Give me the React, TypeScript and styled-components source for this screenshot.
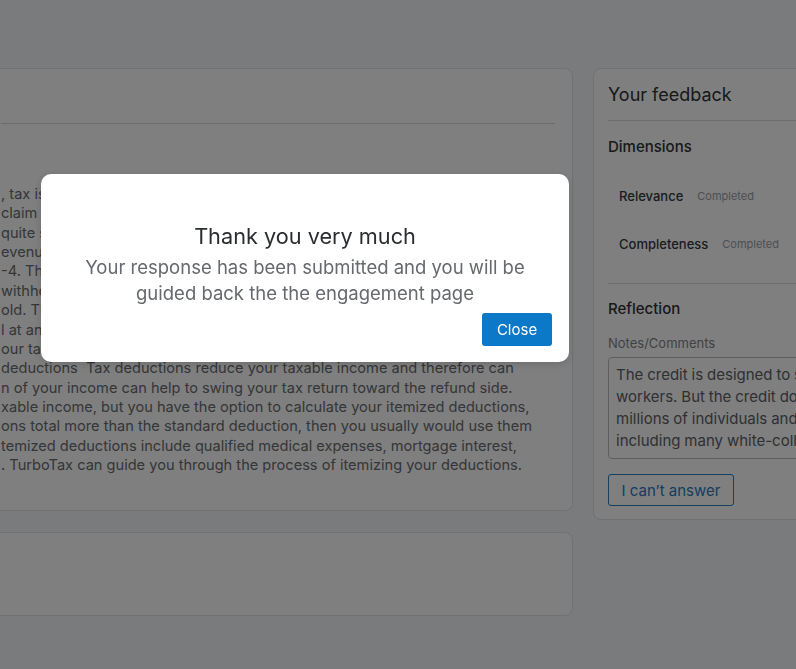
import React from "react";
import styled, { createGlobalStyle } from "styled-components";

const GlobalStyle = createGlobalStyle`
  html, body {
    margin: 0;
    padding: 0;
    background: #f4f6f8;
    font-family: Inter, "Noto Sans", "Liberation Sans", sans-serif;
    overflow: hidden;
  }
  * {
    box-sizing: border-box;
  }
`;

const Page = styled.div`
  display: grid;
  grid-template-columns: 590px 262px;
  column-gap: 20px;
  align-items: start;
  padding-top: 68px;
  margin-left: -17px;
  width: 900px;
`;

const MainColumn = styled.div`
  display: flex;
  flex-direction: column;
  gap: 21px;
`;

const Card = styled.section<{ $height: number }>`
  height: ${({ $height }) => $height}px;
  background: #ffffff;
  border: 1px solid #dfe2e6;
  border-radius: 8px;
  overflow: hidden;
`;

const CardHeader = styled.div`
  height: 55px;
  margin: 0 17px;
  border-bottom: 1px solid #d6d9dd;
`;

const ArticleText = styled.div`
  padding: 61px 17px 0;
  overflow: hidden;
  color: #686c70;
  font-size: 14.6px;
  line-height: 19.36px;
`;

const Line = styled.div`
  white-space: pre;
`;

const Panel = styled.aside`
  background: #ffffff;
  border: 1px solid #dfe2e6;
  border-radius: 8px;
  padding: 0 14px 13px;
  height: 452px;
`;

const PanelTitle = styled.h2`
  margin: 0;
  padding: 14px 0 14px;
  font-size: 18px;
  line-height: 23px;
  font-weight: 400;
  color: #2e3236;
  border-bottom: 1px solid #d6d9dd;
  white-space: nowrap;
`;

const Section = styled.div<{ $divider?: boolean; $top: number }>`
  padding: ${({ $top }) => $top}px 0 15px;
  border-bottom: ${({ $divider }) => ($divider ? "1px solid #d6d9dd" : "none")};
`;

const SectionTitle = styled.h3`
  margin: 0;
  font-size: 15px;
  line-height: 20px;
  font-weight: 500;
  color: #2e3236;
`;

const DimensionList = styled.div`
  display: flex;
  flex-direction: column;
  margin-top: 15px;
`;

const DimensionRow = styled.div`
  display: flex;
  align-items: center;
  gap: 14px;
  height: 48px;
  padding-left: 11px;
`;

const DimensionName = styled.span`
  font-size: 13px;
  font-weight: 500;
  color: #34383c;
`;

const DimensionStatus = styled.span`
  font-size: 11px;
  color: #9a9ea3;
`;

const FieldLabel = styled.div`
  margin-top: 15px;
  font-size: 13px;
  line-height: 18px;
  color: #80858a;
`;

const NoteBox = styled.div`
  margin-top: 5px;
  margin-right: -30px;
  height: 102px;
  padding: 6px 7px;
  border: 1px solid #b9bdc2;
  border-radius: 4px;
  font-size: 15px;
  line-height: 22px;
  word-spacing: -0.3px;
  color: #5c6166;
  white-space: pre;
  overflow: hidden;
`;

const OutlineButton = styled.button`
  margin-top: 15px;
  height: 32px;
  width: 126px;
  padding: 0;
  background: #ffffff;
  border: 1.5px solid #2a80c0;
  border-radius: 3px;
  color: #2a7aba;
  font-family: inherit;
  font-size: 15px;
`;

const Overlay = styled.div`
  position: fixed;
  inset: 0;
  background: rgba(0, 0, 0, 0.5);
  padding: 174px 0 0 41px;
`;

const Modal = styled.div`
  width: 528px;
  height: 188px;
  background: #ffffff;
  border-radius: 10px;
  padding: 48px 17px 16px;
  display: flex;
  flex-direction: column;
  align-items: center;
  box-shadow: 0 2px 8px rgba(0, 0, 0, 0.15);
`;

const ModalTitle = styled.h1`
  margin: 0;
  font-size: 21.7px;
  line-height: 28px;
  font-weight: 400;
  color: #2a2d30;
`;

const ModalText = styled.p`
  margin: 4px 0 0;
  font-size: 18.5px;
  line-height: 26px;
  color: #66696d;
  text-align: center;
`;

const ModalFooter = styled.div`
  align-self: stretch;
  display: flex;
  justify-content: flex-end;
  margin-top: auto;
`;

const PrimaryButton = styled.button`
  width: 70px;
  height: 33px;
  padding: 0;
  border: none;
  border-radius: 3px;
  background: #0b78c8;
  color: #ffffff;
  font-family: inherit;
  font-size: 15px;
`;

const articleLines = [
  ", tax is withheld from every paycheck based on what you",
  "claim on your W-4 form. When too much is withheld, it is",
  "quite simple to get that money back from the Internal",
  "evenue Service when you file your return in April.",
  "-4. This form tells your employer how much to hold back",
  "withheld from your pay depends on your filing status and",
  "old. The more allowances you claim, the less is held back",
  "l at any time during the year if your situation changes.",
  "our tax refund also depends on the credits you can claim.",
  "deductions  Tax deductions reduce your taxable income and therefore can",
  "n of your income can help to swing your tax return toward the refund side.",
  "xable income, but you have the option to calculate your itemized deductions,",
  "ons total more than the standard deduction, then you usually would use them",
  "temized deductions include qualified medical expenses, mortgage interest,",
  ". TurboTax can guide you through the process of itemizing your deductions.",
];

const noteText = [
  "The credit is designed to support low-income",
  "workers. But the credit does help the",
  "millions of individuals and families,",
  "including many white-collar workers.",
].join("\n");

const dimensions = ["Relevance", "Completeness"];

export default function App() {
  return (
    <>
      <GlobalStyle />
      <Page>
        <MainColumn>
          <Card $height={443}>
            <CardHeader />
            <ArticleText>
              {articleLines.map((line) => (
                <Line key={line}>{line}</Line>
              ))}
            </ArticleText>
          </Card>
          <Card $height={84} />
        </MainColumn>
        <Panel>
          <PanelTitle>Your feedback</PanelTitle>
          <Section $divider $top={16}>
            <SectionTitle>Dimensions</SectionTitle>
            <DimensionList>
              {dimensions.map((name) => (
                <DimensionRow key={name}>
                  <DimensionName>{name}</DimensionName>
                  <DimensionStatus>Completed</DimensionStatus>
                </DimensionRow>
              ))}
            </DimensionList>
          </Section>
          <Section $top={15}>
            <SectionTitle>Reflection</SectionTitle>
            <FieldLabel>Notes/Comments</FieldLabel>
            <NoteBox>{noteText}</NoteBox>
            <OutlineButton>I can’t answer</OutlineButton>
          </Section>
        </Panel>
      </Page>
      <Overlay>
        <Modal>
          <ModalTitle>Thank you very much</ModalTitle>
          <ModalText>
            Your response has been submitted and you will be
            <br />
            guided back the the engagement page
          </ModalText>
          <ModalFooter>
            <PrimaryButton>Close</PrimaryButton>
          </ModalFooter>
        </Modal>
      </Overlay>
    </>
  );
}
